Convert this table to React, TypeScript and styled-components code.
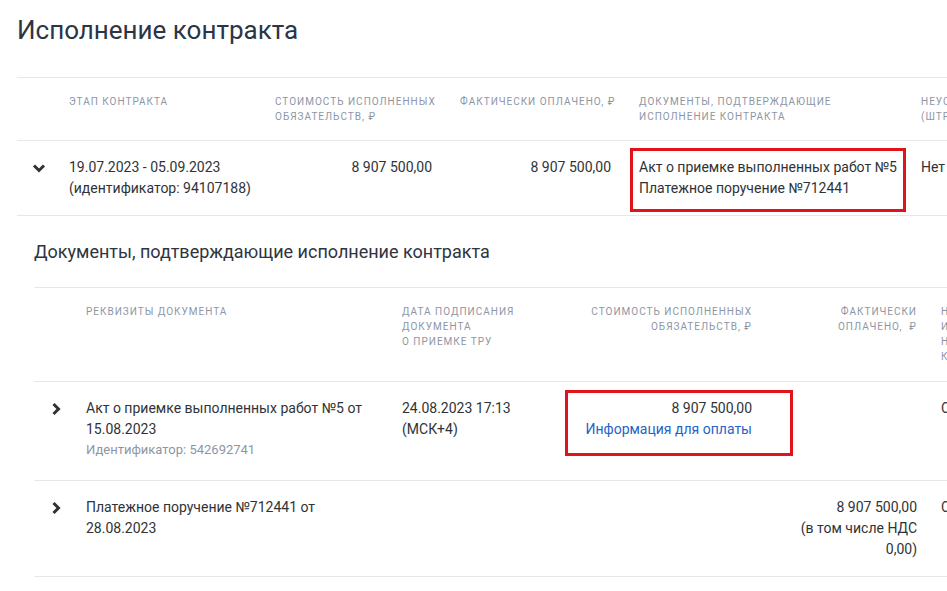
import React from "react";
import styled, { createGlobalStyle } from "styled-components";

const Global = createGlobalStyle`
  html, body { margin: 0; padding: 0; background: #fff; }
  body { font-family: Roboto, "Noto Sans", sans-serif; color: #2f3338; overflow: hidden; }
  * { box-sizing: border-box; }
`;

const Page = styled.div`
  width: 947px;
  height: 591px;
  overflow: hidden;
  padding: 13px 0 0 17px;
`;

const Title = styled.h1`
  margin: 0;
  font: 400 26px/34px Roboto, sans-serif;
  color: #2b3545;
`;

const Table = styled.div<{ $top: number; $indent: number }>`
  margin-top: ${(p) => p.$top}px;
  margin-left: ${(p) => p.$indent}px;
  width: 1100px;
  border-top: 1px solid #e4e7eb;
`;

const Row = styled.div<{ $cols: string; $padBottom?: number }>`
  display: grid;
  grid-template-columns: ${(p) => p.$cols};
  align-items: start;
  padding: 16px 0 ${(p) => p.$padBottom ?? 16}px;
  border-bottom: 1px solid #e4e7eb;
`;

const HeadCell = styled.div<{ $right?: boolean; $pr?: number }>`
  font: 400 10px/15px Roboto, sans-serif;
  letter-spacing: 1px;
  text-transform: uppercase;
  color: #8d96a5;
  white-space: nowrap;
  text-align: ${(p) => (p.$right ? "right" : "left")};
  padding-right: ${(p) => p.$pr ?? 0}px;
`;

const Cell = styled.div<{ $right?: boolean; $pr?: number }>`
  position: relative;
  font: 400 14px/21px Roboto, sans-serif;
  color: #2f3338;
  text-align: ${(p) => (p.$right ? "right" : "left")};
  padding-right: ${(p) => p.$pr ?? 0}px;
`;

const ToggleCell = styled.div<{ $pl: number }>`
  padding-left: ${(p) => p.$pl}px;
  height: 21px;
  display: flex;
  align-items: center;
  color: #2f3338;
`;

const Subtitle = styled.h2`
  margin: 0;
  font: 400 18px/24px Roboto, sans-serif;
  color: #2e3440;
`;

const SubWrap = styled.div`
  padding: 24px 0 0 17px;
`;

const Muted = styled.div`
  font: 400 13px/20px Roboto, sans-serif;
  color: #8d96a5;
`;

const Link = styled.a`
  display: block;
  color: #2563c6;
  text-decoration: none;
  font: 400 14px/21px Roboto, sans-serif;
`;

const Highlight = styled.div<{ $t: number; $r: number; $b: number; $l: number }>`
  position: absolute;
  top: ${(p) => -p.$t}px;
  right: ${(p) => -p.$r}px;
  bottom: ${(p) => -p.$b}px;
  left: ${(p) => -p.$l}px;
  border: 3px solid #e0131b;
  pointer-events: none;
`;

const Chevron = ({ dir }: { dir: "down" | "right" }) =>
  dir === "down" ? (
    <svg width="14" height="10" viewBox="0 0 14 10">
      <polyline points="2,2.5 7,7.5 12,2.5" fill="none" stroke="#2f3338" strokeWidth="3" />
    </svg>
  ) : (
    <svg width="10" height="14" viewBox="0 0 10 14">
      <polyline points="2.5,2 7.5,7 2.5,12" fill="none" stroke="#2f3338" strokeWidth="3" />
    </svg>
  );

const COLS1 = "52px 206px 185px 179px 282px 1fr";
const COLS2 = "52px 316px 158px 216px 165px 1fr";

export default function App() {
  return (
    <>
      <Global />
      <Page>
        <Title>Исполнение контракта</Title>

        <Table $top={30} $indent={0}>
          <Row $cols={COLS1}>
            <div />
            <HeadCell>Этап контракта</HeadCell>
            <HeadCell>
              Стоимость исполненных
              <br />
              обязательств, ₽
            </HeadCell>
            <HeadCell>Фактически оплачено, ₽</HeadCell>
            <HeadCell>
              Документы, подтверждающие
              <br />
              исполнение контракта
            </HeadCell>
            <HeadCell>
              Неустойки
              <br />
              (штрафы, пени)
            </HeadCell>
          </Row>
          <Row $cols={COLS1}>
            <ToggleCell $pl={15}>
              <Chevron dir="down" />
            </ToggleCell>
            <Cell>
              19.07.2023 - 05.09.2023
              <br />
              (идентификатор: 94107188)
            </Cell>
            <Cell $right $pr={28}>8 907 500,00</Cell>
            <Cell $right $pr={28}>8 907 500,00</Cell>
            <Cell $pr={16}>
              <div>Акт о приемке выполненных работ №5</div>
              <div>Платежное поручение №712441</div>
              <Highlight $t={9} $r={-15} $b={13} $l={9} />
            </Cell>
            <Cell>Нет</Cell>
          </Row>
        </Table>

        <SubWrap>
          <Subtitle>Документы, подтверждающие исполнение контракта</Subtitle>
        </SubWrap>

        <Table $top={23} $indent={17}>
          <Row $cols={COLS2} $padBottom={17}>
            <div />
            <HeadCell>Реквизиты документа</HeadCell>
            <HeadCell>
              Дата подписания
              <br />
              документа
              <br />о приемке ТРУ
            </HeadCell>
            <HeadCell $right $pr={24}>
              Стоимость исполненных
              <br />
              обязательств, ₽
            </HeadCell>
            <HeadCell $right $pr={24}>
              Фактически
              <br />
              оплачено,&nbsp; ₽
            </HeadCell>
            <HeadCell>
              Наличие
              <br />
              информации о
              <br />
              ненадлежащем
              <br />
              качестве
            </HeadCell>
          </Row>
          <Row $cols={COLS2} $padBottom={20}>
            <ToggleCell $pl={17}>
              <Chevron dir="right" />
            </ToggleCell>
            <Cell $pr={28}>
              Акт о приемке выполненных работ №5 от 15.08.2023
              <Muted>Идентификатор: 542692741</Muted>
            </Cell>
            <Cell>
              24.08.2023 17:13
              <br />
              (МСК+4)
            </Cell>
            <Cell $right $pr={24}>
              <div>8 907 500,00</div>
              <Link href="#">Информация для оплаты</Link>
              <Highlight $t={8} $r={17} $b={16} $l={-5} />
            </Cell>
            <Cell $right $pr={24} />
            <Cell>Сведения отсутствуют</Cell>
          </Row>
          <Row $cols={COLS2}>
            <ToggleCell $pl={17}>
              <Chevron dir="right" />
            </ToggleCell>
            <Cell $pr={28}>Платежное поручение №712441 от 28.08.2023</Cell>
            <Cell />
            <Cell $right $pr={24} />
            <Cell $right $pr={24}>
              <div>8 907 500,00</div>
              <div>(в том числе НДС 0,00)</div>
            </Cell>
            <Cell>Сведения отсутствуют</Cell>
          </Row>
        </Table>
      </Page>
    </>
  );
}
